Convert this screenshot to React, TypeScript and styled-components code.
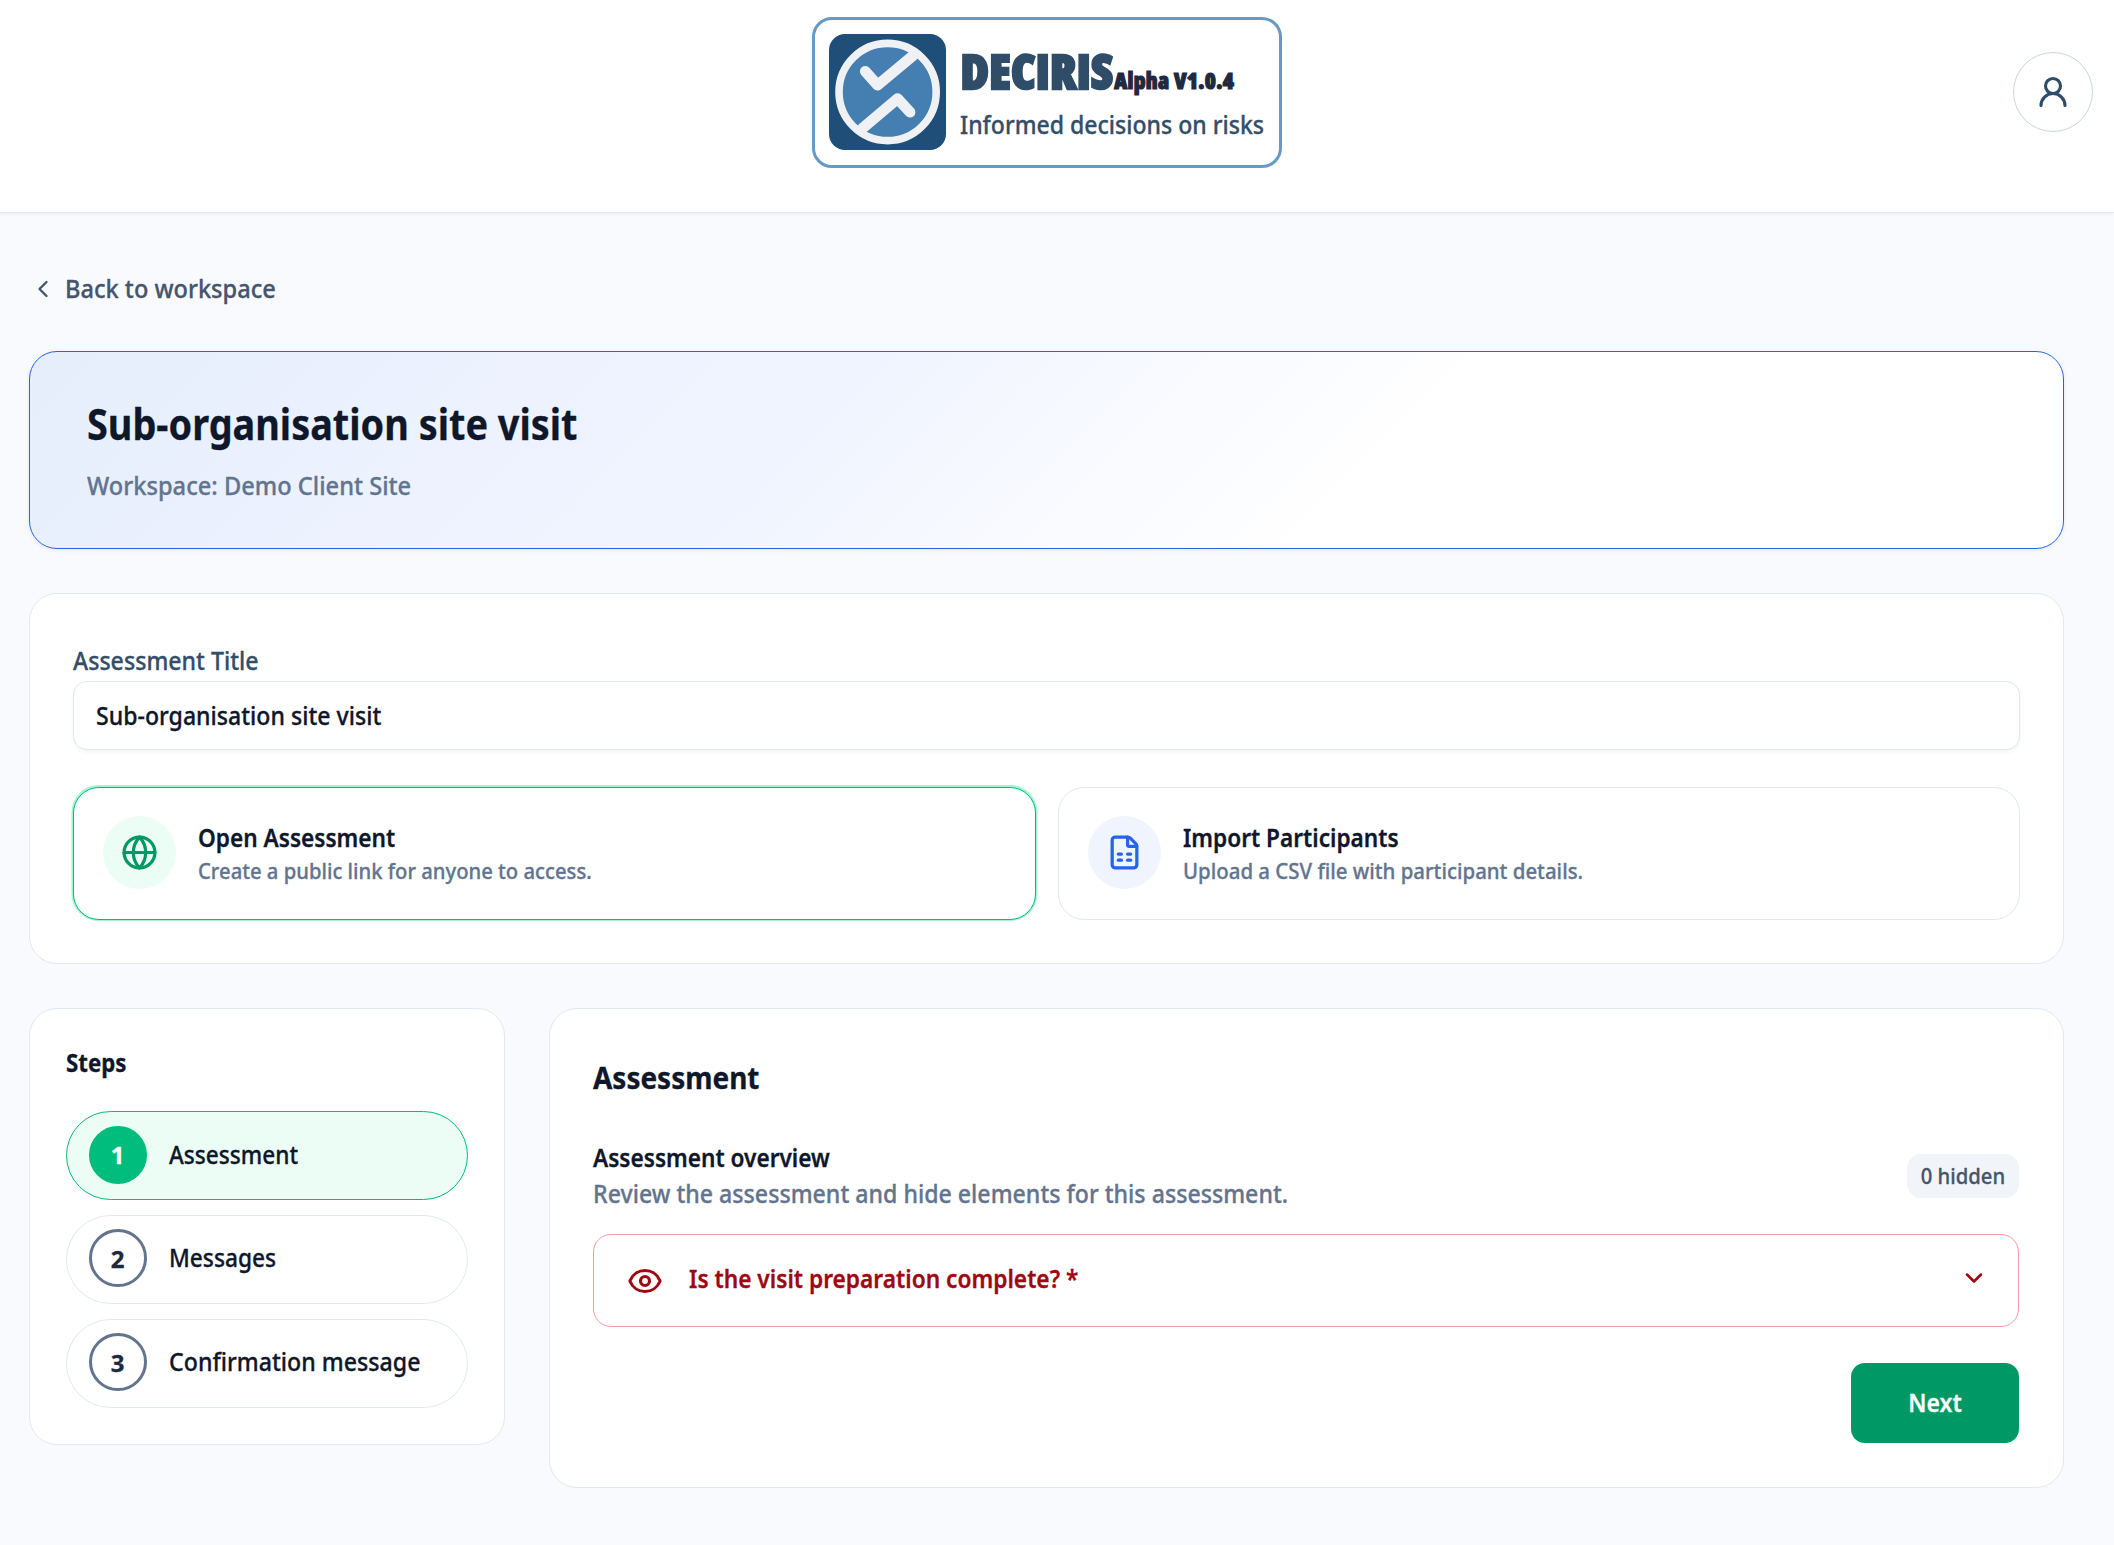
import React from "react";
import styled, { createGlobalStyle } from "styled-components";
import { ChevronDown, ChevronLeft, Eye, FileSpreadsheet, Globe, UserRound } from "lucide-react";

const GlobalStyle = createGlobalStyle`
  *, *::before, *::after { box-sizing: border-box; }
  body {
    margin: 0;
    background: #f9fafe;
    color: #0f172b;
    font-family: "Noto Sans", "Open Sans", sans-serif;
    font-size: 25px;
    font-weight: 500;
    -webkit-text-stroke: 0.3px currentColor;
  }
  h1, h2, h3, p { margin: 0; font-size: inherit; font-weight: inherit; }
  button, input { font: inherit; color: inherit; }
  svg { display: block; flex: none; }
`;

/* Narrowed type: the interface face is slightly condensed. */
const Narrow = styled.span<{ $scale?: number; $center?: boolean }>`
  display: inline-block;
  white-space: nowrap;
  transform: translateY(-1px) scaleX(${(p) => p.$scale ?? 0.925});
  transform-origin: ${(p) => (p.$center ? "center" : "left")};
`;

const Page = styled.div`
  min-height: 1545px;
`;

/* Header */
const Header = styled.header`
  display: grid;
  grid-template-columns: 1fr auto 1fr;
  align-items: start;
  height: 213px;
  padding: 17px 21px 0 0;
  background: #fff;
  border-bottom: 1px solid #e2e8f0;
  box-shadow: 0 1px 4px rgba(15, 23, 43, 0.06);
`;

const Brand = styled.a`
  grid-column: 2;
  display: flex;
  gap: 14px;
  width: 470px;
  height: 151px;
  padding: 14px;
  border: 3px solid #6699c4;
  border-radius: 20px;
`;

const BrandText = styled.div`
  width: 306px;
  white-space: nowrap;
`;

const BrandName = styled.div`
  display: flex;
  align-items: baseline;
  height: 72px;
  padding-left: 1px;
  line-height: 72px;
  font-family: "Open Sans", sans-serif;
  font-stretch: 75%;
  font-weight: 800;
  font-size: 48.5px;
  letter-spacing: 0.25px;
  color: #2f4d68;
  -webkit-text-stroke: 2.4px #2f4d68;
`;

const Version = styled.span`
  margin-left: 1px;
  font-size: 22.5px;
  letter-spacing: 0.35px;
  color: #1f2940;
  -webkit-text-stroke: 1.2px #1f2940;
`;

const Tagline = styled.p`
  padding-top: 1px;
  line-height: 37px;
  color: #334e68;
`;

const Avatar = styled.button`
  grid-column: 3;
  justify-self: end;
  display: grid;
  place-items: center;
  width: 80px;
  height: 80px;
  margin-top: 35px;
  padding: 0;
  border: 1px solid #cad5e2;
  border-radius: 50%;
  background: #fff;
  color: #2f4d68;
`;

/* Page body */
const Main = styled.main`
  display: flex;
  flex-direction: column;
  padding: 56px 50px 0 29px;
`;

const BackLink = styled.a`
  display: flex;
  align-items: center;
  gap: 8px;
  height: 39px;
  margin-bottom: 43px;
  color: #45556c;
`;

const Hero = styled.section`
  height: 198px;
  margin-bottom: 44px;
  padding: 44px 57px;
  border: 1px solid #2563eb;
  border-radius: 28px;
  background: linear-gradient(135deg, #e6eefc 0%, #f0f4ff 37%, #ffffff 66%);
  box-shadow: 0 1px 4px rgba(15, 23, 43, 0.08);
`;

const HeroTitle = styled.h1`
  line-height: 56px;
  font-size: 43.5px;
  font-weight: 700;
`;

const HeroMeta = styled.p`
  margin-top: 16px;
  line-height: 37px;
  color: #62748e;
`;

const Card = styled.section`
  border: 1px solid #e2e8f0;
  border-radius: 28px;
  background: #fff;
`;

const SetupCard = styled(Card)`
  height: 371px;
  margin-bottom: 44px;
  padding: 49px 43px 0;
`;

const Label = styled.label`
  display: block;
  line-height: 37px;
  color: #334e68;
`;

const TitleField = styled.div`
  height: 69px;
  margin: 1px 0 37px;
  padding: 0 22px;
  border: 1px solid #e2e8f0;
  border-radius: 14px;
  background: #fff;
  box-shadow: 0 2px 4px rgba(15, 23, 43, 0.05);
`;

const TitleInput = styled.input`
  display: block;
  width: 100%;
  height: 65px;
  padding: 0;
  border: 0;
  outline: none;
  background: transparent;
  transform: scaleX(0.924);
  transform-origin: left;
`;

const Options = styled.div`
  display: grid;
  grid-template-columns: 1fr 1fr;
  gap: 22px;
`;

const Option = styled.button<{ $selected?: boolean }>`
  display: flex;
  align-items: center;
  gap: 22px;
  height: 133px;
  padding: 0 29px 1px;
  border: 1px solid ${(p) => (p.$selected ? "#00bc7d" : "#e2e8f0")};
  border-radius: 26px;
  background: #fff;
  box-shadow: ${(p) => (p.$selected ? "0 -0.5px 0 1.5px #a4f4cf" : "none")};
  text-align: left;
`;

const OptionIcon = styled.span<{ $tone: "green" | "blue" }>`
  display: grid;
  place-items: center;
  width: 73px;
  height: 73px;
  margin-bottom: 1px;
  border-radius: 50%;
  background: ${(p) => (p.$tone === "green" ? "#ecfdf5" : "#eff4ff")};
  color: ${(p) => (p.$tone === "green" ? "#009966" : "#2563eb")};
`;

const OptionBody = styled.div`
  padding-top: 1px;
`;

const OptionTitle = styled.h3`
  line-height: 34px;
  font-weight: 600;
`;

const OptionText = styled.p`
  line-height: 32px;
  font-size: 22px;
  color: #62748e;
`;

const Columns = styled.div`
  display: grid;
  grid-template-columns: 475.5px 1fr;
  gap: 44.5px;
  align-items: start;
`;

/* Steps */
const StepsCard = styled(Card)`
  height: 437px;
  padding: 36px 36px 0;
`;

const StepsTitle = styled.h3`
  margin-bottom: 29px;
  line-height: 37px;
  font-weight: 700;
`;

const StepList = styled.div`
  display: flex;
  flex-direction: column;
  gap: 14.6px;
`;

const Step = styled.button<{ $active?: boolean }>`
  display: flex;
  align-items: center;
  gap: 22px;
  height: 89.2px;
  padding: 0 22px 2px;
  border: 1px solid ${(p) => (p.$active ? "#00bc7d" : "#e2e8f0")};
  border-radius: 45px;
  background: ${(p) => (p.$active ? "#ecfdf5" : "#fff")};
`;

const StepNumber = styled.span<{ $active?: boolean }>`
  display: grid;
  place-items: center;
  width: 58px;
  height: 58px;
  padding-right: 1px;
  border: 3px solid ${(p) => (p.$active ? "#00bc7d" : "#62748e")};
  border-radius: 50%;
  background: ${(p) => (p.$active ? "#00bc7d" : "#fff")};
  color: ${(p) => (p.$active ? "#fff" : "#1d293d")};
  font-size: 24px;
  font-weight: 700;
`;

/* Assessment panel */
const Panel = styled(Card)`
  height: 480px;
  padding: 47px 44px 0 43px;
`;

const PanelTitle = styled.h2`
  margin-bottom: 40px;
  line-height: 44px;
  font-size: 31px;
  font-weight: 700;
`;

const Overview = styled.div`
  display: flex;
  align-items: center;
  justify-content: space-between;
  margin-bottom: 22px;
`;

const OverviewTitle = styled.h3`
  line-height: 36px;
  font-weight: 600;
`;

const OverviewText = styled.p`
  line-height: 36px;
  color: #62748e;
`;

const HiddenBadge = styled.span`
  display: flex;
  justify-content: center;
  width: 112px;
  border-radius: 14px;
  background: #f1f5f9;
  color: #45556c;
  font-size: 22px;
  line-height: 44px;
`;

const Question = styled.div`
  display: flex;
  align-items: center;
  height: 93px;
  margin-bottom: 36px;
  padding: 0 30px 0 33px;
  border: 1px solid #f99a9e;
  border-radius: 18px;
  color: #9f0712;
`;

const QuestionText = styled.span`
  flex: 1;
  padding: 0 0 3px 26px;
  font-weight: 600;
`;

const QuestionToggle = styled.span`
  padding-bottom: 5px;
`;

const Actions = styled.div`
  display: flex;
  justify-content: flex-end;
`;

const NextButton = styled.button`
  width: 168px;
  height: 80px;
  padding: 0 0 1px;
  border: 0;
  border-radius: 14px;
  background: #009966;
  color: #fff;
  font-weight: 600;
`;

function BrandMark() {
  return (
    <svg width="117" height="116" viewBox="0 0 117 116" fill="none">
      <rect width="117" height="116" rx="16" fill="#1f4e79" />
      <circle cx="58.6" cy="58" r="48.6" fill="#457eb1" stroke="#eff1f4" strokeWidth="7.6" />
      <g stroke="#eff1f4" strokeWidth="10.8" strokeLinecap="round" strokeLinejoin="round">
        <path d="M36.3 37.4 48.6 51.2 84 21.6" />
        <path d="M33.4 94.4 68.6 64.6 81 78.2" />
      </g>
    </svg>
  );
}

const steps = [
  { label: "Assessment", scale: 0.905 },
  { label: "Messages", scale: 0.908 },
  { label: "Confirmation message", scale: 0.927 },
];

export default function App() {
  return (
    <Page>
      <GlobalStyle />
      <Header>
        <Brand>
          <BrandMark />
          <BrandText>
            <BrandName>
              DECIRIS<Version>Alpha V1.0.4</Version>
            </BrandName>
            <Tagline>
              <Narrow $scale={0.922}>Informed decisions on risks</Narrow>
            </Tagline>
          </BrandText>
        </Brand>
        <Avatar aria-label="Account">
          <UserRound size={36} strokeWidth={2.1} />
        </Avatar>
      </Header>

      <Main>
        <BackLink>
          <ChevronLeft size={28} />
          <Narrow $scale={0.944}>Back to workspace</Narrow>
        </BackLink>

        <Hero>
          <HeroTitle>
            <Narrow $scale={0.87}>Sub-organisation site visit</Narrow>
          </HeroTitle>
          <HeroMeta>
            <Narrow $scale={0.946}>Workspace: Demo Client Site</Narrow>
          </HeroMeta>
        </Hero>

        <SetupCard>
          <Label htmlFor="title">
            <Narrow>Assessment Title</Narrow>
          </Label>
          <TitleField>
            <TitleInput id="title" defaultValue="Sub-organisation site visit" />
          </TitleField>
          <Options>
            <Option $selected>
              <OptionIcon $tone="green">
                <Globe size={37} strokeWidth={2.1} />
              </OptionIcon>
              <OptionBody>
                <OptionTitle>
                  <Narrow $scale={0.905}>Open Assessment</Narrow>
                </OptionTitle>
                <OptionText>
                  <Narrow $scale={0.92}>Create a public link for anyone to access.</Narrow>
                </OptionText>
              </OptionBody>
            </Option>
            <Option>
              <OptionIcon $tone="blue">
                <FileSpreadsheet size={37} strokeWidth={2.1} />
              </OptionIcon>
              <OptionBody>
                <OptionTitle>
                  <Narrow $scale={0.905}>Import Participants</Narrow>
                </OptionTitle>
                <OptionText>
                  <Narrow $scale={0.928}>Upload a CSV file with participant details.</Narrow>
                </OptionText>
              </OptionBody>
            </Option>
          </Options>
        </SetupCard>

        <Columns>
          <StepsCard>
            <StepsTitle>
              <Narrow $scale={0.89}>Steps</Narrow>
            </StepsTitle>
            <StepList>
              {steps.map((step, i) => (
                <Step key={step.label} $active={i === 0}>
                  <StepNumber $active={i === 0}>{i + 1}</StepNumber>
                  <Narrow $scale={step.scale}>{step.label}</Narrow>
                </Step>
              ))}
            </StepList>
          </StepsCard>

          <Panel>
            <PanelTitle>
              <Narrow $scale={0.902}>Assessment</Narrow>
            </PanelTitle>
            <Overview>
              <div>
                <OverviewTitle>
                  <Narrow $scale={0.905}>Assessment overview</Narrow>
                </OverviewTitle>
                <OverviewText>
                  <Narrow $scale={0.926}>Review the assessment and hide elements for this assessment.</Narrow>
                </OverviewText>
              </div>
              <HiddenBadge>
                <Narrow $center $scale={0.92}>0 hidden</Narrow>
              </HiddenBadge>
            </Overview>
            <Question>
              <Eye size={36} strokeWidth={2.1} />
              <QuestionText>
                <Narrow $scale={0.908}>Is the visit preparation complete? *</Narrow>
              </QuestionText>
              <QuestionToggle>
                <ChevronDown size={28} strokeWidth={2.2} />
              </QuestionToggle>
            </Question>
            <Actions>
              <NextButton>
                <Narrow $center $scale={0.92}>Next</Narrow>
              </NextButton>
            </Actions>
          </Panel>
        </Columns>
      </Main>
    </Page>
  );
}
